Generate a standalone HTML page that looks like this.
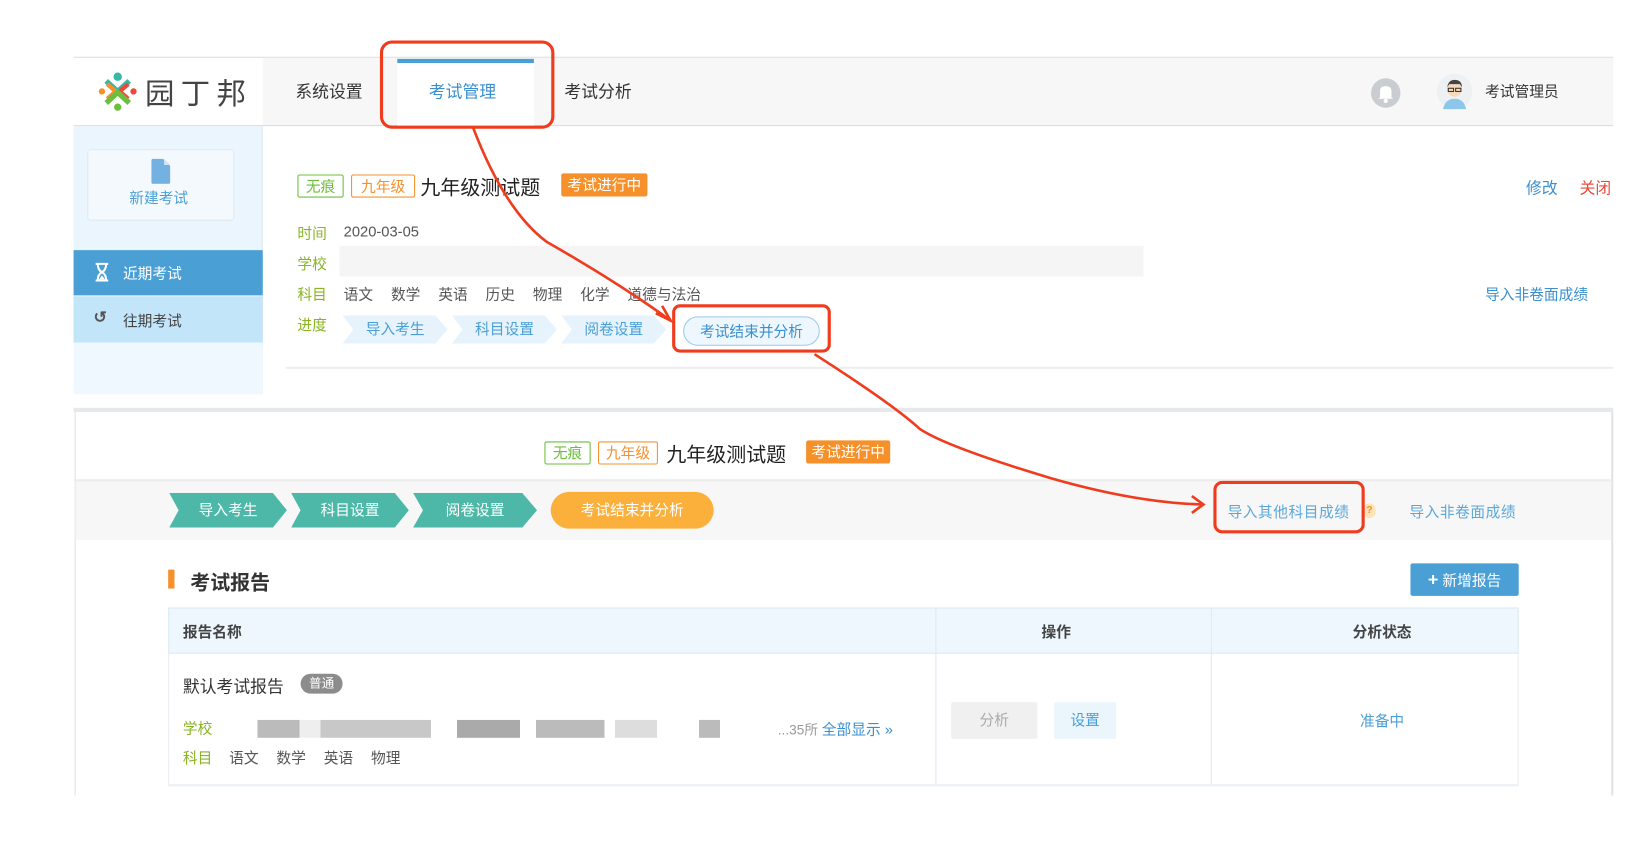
<!DOCTYPE html>
<html><head><meta charset="utf-8"><style>
*{margin:0;padding:0;box-sizing:border-box}
html,body{width:1648px;height:850px;overflow:hidden;background:#fff}
#s{position:absolute;left:0;top:0;width:1568px;height:809px;transform:scale(1.051);transform-origin:0 0;font-family:"Liberation Sans","Noto Sans CJK SC",sans-serif;color:#333}
.a{position:absolute;white-space:nowrap}
.lbl{color:#8ab326;font-size:14px}
.g{color:#555;font-size:14px}
.g span{display:inline-block;width:45px}
.tag{position:absolute;border:1px solid;border-radius:2px;font-size:14px;line-height:20px;text-align:center;background:#fff}
.chev{position:absolute;height:27px;background:#e6f3fc;color:#4a9fd5;font-size:14px;line-height:27px;text-align:center;clip-path:polygon(0 0,88% 0,100% 50%,88% 100%,0 100%,10% 50%)}
.tchev{position:absolute;height:33px;background:#4db8a8;color:#fff;font-size:14px;line-height:33px;text-align:center;clip-path:polygon(0 0,88% 0,100% 50%,88% 100%,0 100%,8% 50%)}
</style></head><body><div id="s">
<!-- header -->
<div class="a" style="left:70px;top:54px;width:1465px;height:1px;background:#ddd"></div>
<div class="a" style="left:250px;top:55px;width:1285px;height:65px;background:#f7f7f7"></div>
<div class="a" style="left:70px;top:119px;width:1465px;height:1px;background:#ddd"></div>
<svg class="a" style="left:93px;top:68px" width="38" height="38" viewBox="0 0 38 38">
<circle cx="19" cy="5" r="4" fill="#39b7a5"/><path d="M8 9 L19 19 L30 9" stroke="#39b7a5" stroke-width="5" fill="none"/>
<circle cx="4" cy="19" r="3" fill="#f5902a"/><path d="M9 12 L17 19 L9 26" stroke="#f5902a" stroke-width="4" fill="none"/>
<circle cx="34" cy="19" r="3" fill="#e84b3c"/><path d="M29 12 L21 19 L29 26" stroke="#e84b3c" stroke-width="4" fill="none"/>
<path d="M8 30 L19 20 L30 30" stroke="#6cbf3c" stroke-width="5" fill="none"/><circle cx="19" cy="34" r="3.5" fill="#6cbf3c"/></svg>
<div class="a" style="left:138px;top:68px;font-size:28px;color:#444;letter-spacing:6px">园丁邦</div>
<div class="a" style="left:281px;top:74px;font-size:16px;color:#333">系统设置</div>
<div class="a" style="left:378px;top:56px;width:130px;height:64px;background:#fff;border-top:4px solid #4a9fd5"></div>
<div class="a" style="left:408px;top:74px;font-size:16px;color:#3a8fd0">考试管理</div>
<div class="a" style="left:537px;top:74px;font-size:16px;color:#333">考试分析</div>
<svg class="a" style="left:1304px;top:74px" width="29" height="29"><circle cx="14.5" cy="14.5" r="14" fill="#c9cdd2"/><path d="M9 19 L9 13 Q9 8 14.5 8 Q20 8 20 13 L20 19 L22 20 L7 20 Z" fill="#fff"/><circle cx="14.5" cy="22" r="2" fill="#fff"/></svg>
<svg class="a" style="left:1367px;top:70px" width="34" height="34"><circle cx="17" cy="17" r="17" fill="#eef1f4"/><path d="M6 34 Q8 24 17 24 Q26 24 28 34Z" fill="#8cc6ea"/><circle cx="17" cy="15" r="7" fill="#f6d9b8"/><path d="M10 13 Q11 6 17 6 Q24 6 24 13 L22 10 L12 10Z" fill="#444"/><rect x="11" y="14" width="5" height="3" fill="none" stroke="#333"/><rect x="18" y="14" width="5" height="3" fill="none" stroke="#333"/></svg>
<div class="a" style="left:1413px;top:77px;font-size:14px;color:#333">考试管理员</div>
<!-- sidebar -->
<div class="a" style="left:70px;top:120px;width:180px;height:255px;background:#eaf5fd;border-right:1px solid #dde9f2"></div>
<div class="a" style="left:83px;top:142px;width:140px;height:68px;background:#f4f9fd;border:1px solid #dfeaf2;border-radius:3px"></div>
<svg class="a" style="left:144px;top:151px" width="18" height="24"><path d="M0 2 Q0 0 2 0 L11 0 L18 7 L18 22 Q18 24 16 24 L2 24 Q0 24 0 22Z" fill="#72b1e0"/><path d="M12 0 L12 6 L18 6Z" fill="#cde4f5"/></svg>
<div class="a" style="left:123px;top:178px;font-size:14px;color:#4a9fd5">新建考试</div>
<div class="a" style="left:70px;top:238px;width:180px;height:43px;background:#4a9fd5"></div>
<svg class="a" style="left:90px;top:250px" width="14" height="18"><path d="M1 1 H13 M1 17 H13 M3 1 Q3 7 7 9 Q3 11 3 17 M11 1 Q11 7 7 9 Q11 11 11 17" stroke="#fff" stroke-width="2" fill="none"/><path d="M4 16 L7 12 L10 16Z" fill="#fff"/></svg>
<div class="a" style="left:117px;top:250px;font-size:14px;color:#fff">近期考试</div>
<div class="a" style="left:70px;top:282px;width:180px;height:44px;background:#c3e5f9"></div>
<div class="a" style="left:89px;top:293px;font-size:15px;color:#555;font-weight:bold">↺</div>
<div class="a" style="left:117px;top:295px;font-size:14px;color:#444">往期考试</div>
<div class="a" style="left:70px;top:326px;width:180px;height:49px;background:#eff8fe"></div>
<!-- content top -->
<div class="tag" style="left:283px;top:166px;width:44px;border-color:#6cbf3c;color:#6cbf3c">无痕</div>
<div class="tag" style="left:334px;top:166px;width:61px;border-color:#f5902a;color:#f5902a">九年级</div>
<div class="a" style="left:400px;top:164px;font-size:19px;color:#222">九年级测试题</div>
<div class="a" style="left:534px;top:165px;width:82px;height:22px;background:#f5902a;color:#fff;font-size:14px;line-height:22px;text-align:center;border-radius:2px">考试进行中</div>
<div class="a" style="left:1452px;top:168px;font-size:15px;color:#3a8fd0">修改</div>
<div class="a" style="left:1503px;top:168px;font-size:15px;color:#e84b3c">关闭</div>
<div class="a lbl" style="left:283px;top:212px">时间</div><div class="a g" style="left:327px;top:212px">2020-03-05</div>
<div class="a lbl" style="left:283px;top:241px">学校</div>
<div class="a" style="left:323px;top:234px;width:765px;height:29px;background:#f5f5f5"></div>
<div class="a lbl" style="left:283px;top:270px">科目</div>
<div class="a g" style="left:327px;top:270px"><span>语文</span><span>数学</span><span>英语</span><span>历史</span><span>物理</span><span>化学</span>道德与法治</div>
<div class="a" style="left:1413px;top:270px;font-size:14px;color:#3a8fd0">导入非卷面成绩</div>
<div class="a lbl" style="left:283px;top:299px">进度</div>
<div class="chev" style="left:326px;top:300px;width:100px">导入考生</div>
<div class="chev" style="left:430px;top:300px;width:100px">科目设置</div>
<div class="chev" style="left:534px;top:300px;width:100px">阅卷设置</div>
<div class="a" style="left:650px;top:301px;width:130px;height:28px;border:1px solid #9cc9e8;border-radius:14px;background:#eef7fd;color:#3a8fd0;font-size:14px;line-height:26px;text-align:center">考试结束并分析</div>
<div class="a" style="left:272px;top:349px;width:1263px;height:2px;background:#eee"></div>
<!-- second panel -->
<div class="a" style="left:70px;top:388px;width:1465px;height:4px;background:#e6e9ec"></div>
<div class="a" style="left:71px;top:392px;width:1464px;height:365px;border-left:1px solid #e3e3e3;border-right:2px solid #e3e3e3"></div>
<div class="tag" style="left:518px;top:420px;width:44px;border-color:#6cbf3c;color:#6cbf3c">无痕</div>
<div class="tag" style="left:569px;top:420px;width:57px;border-color:#f5902a;color:#f5902a">九年级</div>
<div class="a" style="left:634px;top:418px;font-size:19px;color:#222">九年级测试题</div>
<div class="a" style="left:767px;top:419px;width:80px;height:22px;background:#f5902a;color:#fff;font-size:14px;line-height:22px;text-align:center;border-radius:2px">考试进行中</div>
<div class="a" style="left:72px;top:456px;width:1461px;height:58px;background:#f7f7f7;border-top:2px solid #ececec"></div>
<div class="tchev" style="left:161px;top:469px;width:112px">导入考生</div>
<div class="tchev" style="left:277px;top:469px;width:112px">科目设置</div>
<div class="tchev" style="left:393px;top:469px;width:118px">阅卷设置</div>
<div class="a" style="left:524px;top:468px;width:155px;height:35px;border-radius:18px;background:#fbb03b;color:#fff;font-size:14px;line-height:35px;text-align:center">考试结束并分析</div>
<div class="a" style="left:1168px;top:477px;font-size:14px;color:#5ba7d8;letter-spacing:0.5px">导入其他科目成绩</div>
<div class="a" style="left:1297px;top:479px;width:12px;height:14px;border-radius:6px;background:#fde3b8;color:#f5902a;font-size:10px;font-weight:bold;text-align:center;line-height:14px">?</div>
<div class="a" style="left:1341px;top:477px;font-size:14px;color:#5ba7d8;letter-spacing:0.5px">导入非卷面成绩</div>
<div class="a" style="left:160px;top:542px;width:6px;height:18px;background:#f5902a"></div>
<div class="a" style="left:181px;top:540px;font-size:19px;color:#333;font-weight:bold">考试报告</div>
<div class="a" style="left:1342px;top:536px;width:103px;height:31px;background:#4a9fd5;border-radius:2px;color:#fff;font-size:14px;line-height:31px;text-align:center"><b style="font-size:17px">+</b> 新增报告</div>
<!-- table -->
<div class="a" style="left:160px;top:578px;width:1285px;height:44px;background:#eef7fd;border:1px solid #dbe9f3"></div>
<div class="a" style="left:160px;top:622px;width:1285px;height:126px;border:1px solid #e8eef2;border-top:none"></div>
<div class="a" style="left:890px;top:578px;width:1px;height:170px;background:#dde8ef"></div>
<div class="a" style="left:1152px;top:578px;width:1px;height:170px;background:#dde8ef"></div>
<div class="a" style="left:160px;top:746px;width:1285px;height:2px;background:#eef1f3"></div>
<div class="a" style="left:174px;top:591px;font-size:14px;font-weight:bold;color:#444">报告名称</div>
<div class="a" style="left:991px;top:591px;font-size:14px;font-weight:bold;color:#444">操作</div>
<div class="a" style="left:1287px;top:591px;font-size:14px;font-weight:bold;color:#444">分析状态</div>
<div class="a" style="left:174px;top:640px;font-size:16px;color:#333">默认考试报告</div>
<div class="a" style="left:286px;top:641px;width:40px;height:19px;border-radius:10px;background:#8c8c8c;color:#fff;font-size:12px;line-height:19px;text-align:center">普通</div>
<div class="a lbl" style="left:174px;top:683px">学校</div>
<div class="a" style="left:245px;top:685px;width:500px;height:17px;background:linear-gradient(90deg,#bbb 0 8%,#eee 8% 12%,#c8c8c8 12% 33%,#fff 33% 38%,#aaa 38% 50%,#fff 50% 53%,#bbb 53% 66%,#fff 66% 68%,#ddd 68% 76%,#fff 76% 84%,#bbb 84% 88%,#fff 88%)"></div>
<div class="a" style="left:740px;top:684px;font-size:13px;color:#999">...35所 <span style="color:#3a8fd0;font-size:14px">全部显示 »</span></div>
<div class="a lbl" style="left:174px;top:711px">科目</div>
<div class="a g" style="left:218px;top:711px"><span>语文</span><span>数学</span><span>英语</span>物理</div>
<div class="a" style="left:905px;top:668px;width:82px;height:35px;background:#f0f0f0;border-radius:2px;color:#aaa;font-size:14px;line-height:35px;text-align:center">分析</div>
<div class="a" style="left:1003px;top:668px;width:59px;height:35px;background:#eaf5fc;border-radius:2px;color:#4a9fd5;font-size:14px;line-height:35px;text-align:center">设置</div>
<div class="a" style="left:1294px;top:676px;font-size:14px;color:#4a9fd5">准备中</div>
<!-- annotations -->
<svg class="a" style="left:0;top:0" width="1568" height="809" fill="none" stroke="#f03c1e" stroke-width="3">
<rect x="363" y="40" width="163" height="81" rx="10"/>
<rect x="641" y="291" width="148" height="43" rx="6"/>
<rect x="1156" y="459" width="141" height="47" rx="7"/>
<path d="M450 121 Q480 200 520 230 Q590 270 638 305" stroke-width="2.5"/>
<path d="M624 298 L638 305 L630 291" stroke-width="2.5"/>
<path d="M775 337 Q850 385 875 408 Q900 425 1000 455 Q1080 478 1143 480" stroke-width="2.5"/>
<path d="M1134 472 L1145 480 L1134 488" stroke-width="2.5"/>
</svg>
</div></body></html>
